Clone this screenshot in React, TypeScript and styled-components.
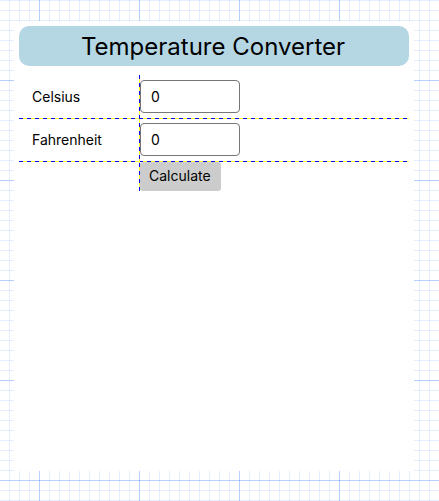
import React, { useState } from "react";
import styled, { createGlobalStyle, css } from "styled-components";

const GlobalStyle = createGlobalStyle`
  *, *::before, *::after { box-sizing: border-box; }
  body {
    margin: 0;
    background-color: #fff;
    color: #000;
    font-family: Inter, "Liberation Sans", sans-serif;
    font-size: 14px;
    line-height: 20px;
  }
`;

const minor = "rgba(0, 85, 255, 0.1)";
const major = "rgba(0, 85, 255, 0.2)";

const Canvas = styled.main`
  display: flex;
  min-height: 100vh;
  padding: 21px 25px 30px 14px;
  background-image:
    linear-gradient(to right, ${major} 1px, transparent 1px),
    linear-gradient(to bottom, ${major} 1px, transparent 1px),
    linear-gradient(to right, ${minor} 1px, transparent 1px),
    linear-gradient(to bottom, ${minor} 1px, transparent 1px);
  background-size: 100px 100px, 100px 100px, 10px 10px, 10px 10px;
  background-position: 39px 0, 0 80px, 9px 0, 0 0;
`;

const Screen = styled.section`
  flex: 1;
  min-width: 0;
  padding: 5px;
  background: #fff;
`;

const Title = styled.h1`
  margin: 0 0 9px;
  padding: 5px 6px 3px 4px;
  border-radius: 10px;
  background: #b5d7e4;
  font-size: 24px;
  font-weight: 400;
  line-height: 32px;
  text-align: center;
`;

const guide = (direction: string) => css`
  background: repeating-linear-gradient(
    ${direction},
    #0000ff 0 4px,
    #ffff33 4px 8px
  );
`;

const Form = styled.form`
  position: relative;
  padding-top: 1px;

  &::after {
    content: "";
    position: absolute;
    top: 0;
    bottom: 0;
    left: 120px;
    width: 1px;
    ${guide("to bottom")}
  }
`;

const Row = styled.div<{ $divided?: boolean }>`
  display: grid;
  grid-template-columns: 121px 1fr;
  align-items: center;
  padding: ${(p) => (p.$divided ? "4px 0 5px" : "0")};
`;

const Guide = styled.div`
  height: 1px;
  ${guide("to right")}
`;

const Label = styled.label`
  padding-left: 13px;
`;

const NumberBox = styled.input`
  width: 100px;
  height: 33px;
  padding: 0 10px;
  border: 1px solid #767676;
  border-radius: 4px;
  background: #fff;
  color: #000;
  font: inherit;
`;

const Button = styled.button`
  grid-column: 2;
  justify-self: start;
  height: 29px;
  padding: 0 10px 2px 9px;
  border: 0;
  border-radius: 3px;
  background: #ccc;
  color: #000;
  font: inherit;
`;

export default function App() {
  const [celsius, setCelsius] = useState("0");
  const [fahrenheit, setFahrenheit] = useState("0");

  const calculate = (event: React.FormEvent) => {
    event.preventDefault();
    setFahrenheit(String((Number(celsius) * 9) / 5 + 32));
  };

  return (
    <>
      <GlobalStyle />
      <Canvas>
        <Screen>
          <Title>Temperature Converter</Title>
          <Form onSubmit={calculate}>
            <Row $divided>
              <Label htmlFor="celsius">Celsius</Label>
              <NumberBox
                id="celsius"
                inputMode="decimal"
                value={celsius}
                onChange={(e) => setCelsius(e.target.value)}
              />
            </Row>
            <Guide />
            <Row $divided>
              <Label htmlFor="fahrenheit">Fahrenheit</Label>
              <NumberBox
                id="fahrenheit"
                inputMode="decimal"
                value={fahrenheit}
                onChange={(e) => setFahrenheit(e.target.value)}
              />
            </Row>
            <Guide />
            <Row>
              <Button type="submit">Calculate</Button>
            </Row>
          </Form>
        </Screen>
      </Canvas>
    </>
  );
}
